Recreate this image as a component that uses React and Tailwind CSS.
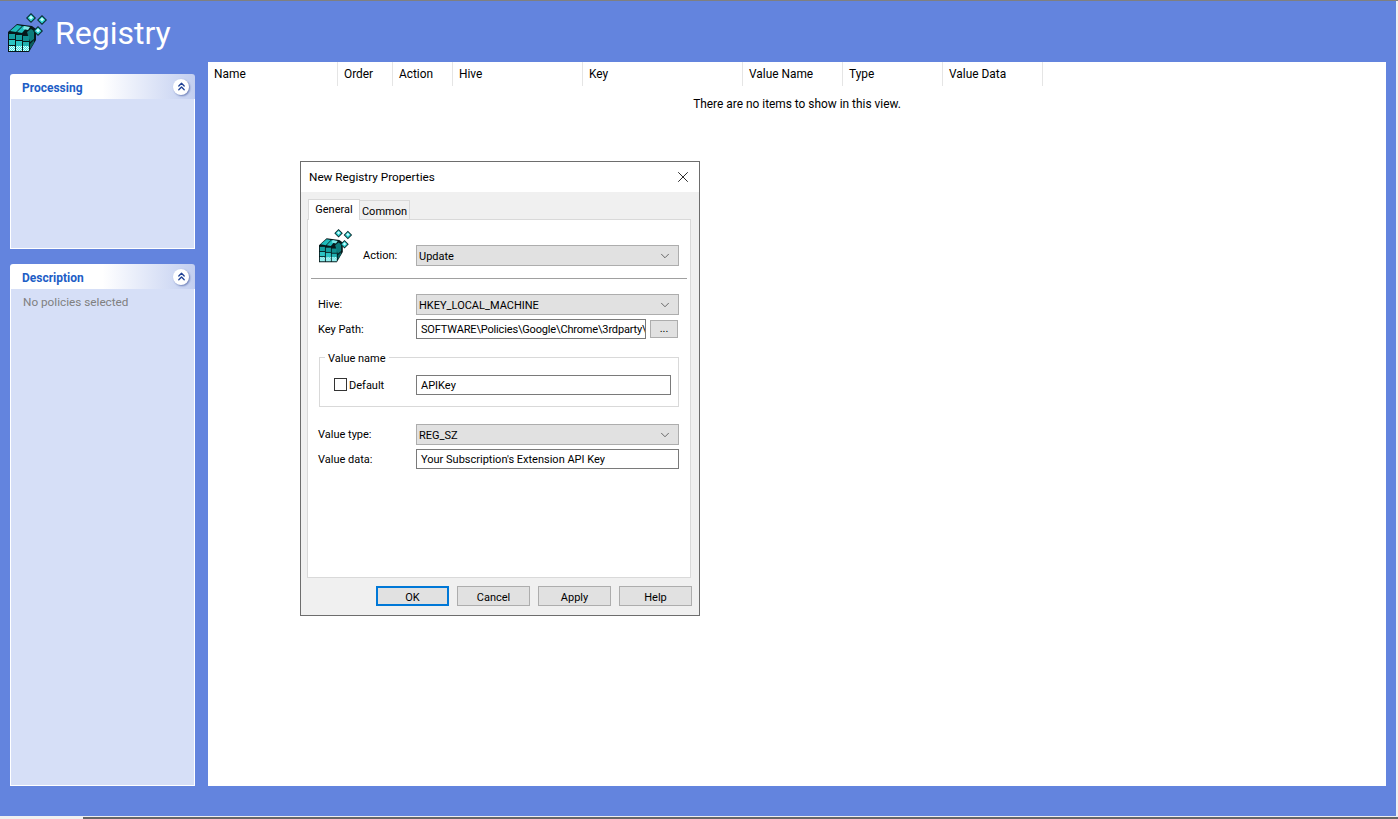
import { X, ChevronDown, ChevronsUp } from "lucide-react";

const font = "font-['Roboto','Noto_Sans',sans-serif]";

const columns = [
  { label: "Name", width: "w-[130px]" },
  { label: "Order", width: "w-[55px]" },
  { label: "Action", width: "w-[60px]" },
  { label: "Hive", width: "w-[130px]" },
  { label: "Key", width: "w-[160px]" },
  { label: "Value Name", width: "w-[100px]" },
  { label: "Type", width: "w-[100px]" },
  { label: "Value Data", width: "w-[100px]" },
];

const frontCells = [
  [1, 21, "#14a0a0"], [8, 22, "#14a0a0"], [15, 23, "#0f8f8f"],
  [1, 27, "#2cc4c4"], [8, 28, "#2cc4c4"], [15, 29, "#22b0b0"],
  [1, 33, "dither"], [8, 33, "dither"], [15, 33, "dither"],
];

const diamonds = [
  [23, 5],
  [34, 7],
  [30, 18],
];

// registry editor cube icon
function RegistryIcon({ size, id }) {
  return (
    <svg width={size} height={size} viewBox="0 0 40 40">
      <defs>
        <pattern id={id} width="2" height="2" patternUnits="userSpaceOnUse">
          <rect width="2" height="2" fill="#45dcdc" />
          <rect width="1" height="1" fill="#d8ffff" />
          <rect x="1" y="1" width="1" height="1" fill="#d8ffff" />
        </pattern>
      </defs>
      <path d="M0 19l9-8 15 2 4 3v11l-7 12H0z" fill="#06181a" />
      <path d="M2 18l7-6 5 1-6 6zM9 19l6-6 4 1-5 6z" fill="#1fbcbc" />
      <path d="M16 13l6 1-2 3-5-1z" fill="#7ee8e8" />
      <path d="M19 19l4-3 3 2v8l-4 3z" fill="#0d7c7c" />
      <path d="M22 31l4-4v3l-4 6z" fill="#0a5f5f" />
      {frontCells.map(([x, y, fill], i) => (
        <path key={i} d={`M${x} ${y}h6v5h-6z`} fill={fill === "dither" ? `url(#${id})` : fill} />
      ))}
      {diamonds.map(([x, y]) => (
        <g key={x}>
          <path d={`M${x} ${y - 5}l5 5-5 5-5-5z`} fill="#062a2c" />
          <path d={`M${x} ${y - 3.5}l3.5 3.5-3.5 3.5-3.5-3.5z`} fill="#2fd0d0" />
          <path d={`M${x} ${y - 2.5}l2 2-2 2-2-2z`} fill="#c8ffff" />
        </g>
      ))}
    </svg>
  );
}

function TaskPanel({ title, bodyHeight, children }) {
  return (
    <div className={"flex flex-col " + (bodyHeight ? "" : "flex-1")}>
      <div className="h-[25px] rounded-t-[3px] bg-gradient-to-r from-white from-50% to-[#c3cff0] flex items-center justify-between pl-3 pr-[6px]">
        <span className="pt-[2px] text-[12px] font-bold text-[#215dc6]">{title}</span>
        <span className="w-[16px] h-[16px] rounded-full bg-white shadow-[1px_1px_2px_#6f80b8] flex items-center justify-center">
          <ChevronsUp size={13} strokeWidth={2.4} className="text-[#1c3f94]" />
        </span>
      </div>
      <div
        className={
          "bg-[#d6dff7] border-x border-b border-white px-3 pt-[5px] text-[11.75px] text-[#808080] " +
          (bodyHeight ? bodyHeight : "flex-1")
        }
      >
        {children}
      </div>
    </div>
  );
}

function Combo({ value }) {
  return (
    <div className="h-[21px] w-[263px] bg-[#e1e1e1] border border-[#adadad] flex items-center justify-between pl-[2px] pr-[6px] text-[11px] text-black">
      <span className="pt-[4px]">{value}</span>
      <ChevronDown size={14} strokeWidth={1.2} className="text-[#333]" />
    </div>
  );
}

function Field({ value, width, tight }) {
  return (
    <div
      className={
        "h-[20px] bg-white border border-[#7a7a7a] flex items-center pl-[4px] pt-[3px] text-[11px] text-black overflow-hidden whitespace-nowrap " +
        (tight ? "tracking-[-0.16px] " : "") +
        width
      }
    >
      {value}
    </div>
  );
}

function Row({ label, children, className = "" }) {
  return (
    <div className={"flex items-center pl-[10px] " + className}>
      <span className="w-[98px] pt-[2px] text-[11px] text-black">{label}</span>
      {children}
    </div>
  );
}

function DialogButton({ label, focused }) {
  return (
    <div
      className={
        "w-[73px] h-[20px] bg-[#e1e1e1] flex items-center justify-center text-[11px] text-black " +
        (focused ? "border-2 border-[#0078d7]" : "border border-[#adadad]")
      }
    >
      <span className="pt-[4px]">{label}</span>
    </div>
  );
}

function RegistryDialog() {
  return (
    <div className="absolute left-[300px] top-[161px] w-[400px] h-[455px] bg-[#f0f0f0] border border-[#6d6d6d] flex flex-col">
      <div className="h-[30px] bg-white flex items-center justify-between pl-2 pr-[7px] shrink-0">
        <span className="pt-[2px] text-[11.75px] text-black">New Registry Properties</span>
        <X size={18} strokeWidth={1.1} className="text-black" />
      </div>

      <div className="flex items-end pl-[7px] h-[27px] shrink-0">
        <div className="w-[52px] h-[21px] bg-white border border-b-0 border-[#d9d9d9] flex items-center justify-center text-[11px] text-black -mb-px z-10">
          General
        </div>
        <div className="w-[50px] h-[19px] bg-[#f0f0f0] border border-b-0 border-l-0 border-[#d9d9d9] flex items-center justify-center text-[11px] text-black">
          <span className="pt-[5px]">Common</span>
        </div>
      </div>

      <div className="ml-[6px] w-[384px] h-[359px] bg-white border border-[#d9d9d9] shrink-0">
        <div className="flex h-[58px]">
          <div className="ml-[11px] mt-[9px] w-[34px]">
            <RegistryIcon size={34} id="dither-small" />
          </div>
          <div className="flex items-start mt-[25px] ml-[10px]">
            <span className="w-[53px] text-[11px] text-black mt-[3px]">Action:</span>
            <Combo value="Update" />
          </div>
        </div>
        <div className="mx-[3px] h-px bg-[#a0a0a0]" />

        <Row label="Hive:" className="mt-[15px]">
          <Combo value="HKEY_LOCAL_MACHINE" />
        </Row>
        <Row label="Key Path:" className="mt-[4px]">
          <Field value="SOFTWARE\Policies\Google\Chrome\3rdparty\" width="w-[230px]" tight />
          <div className="ml-[4px] w-[28px] h-[18px] bg-[#e1e1e1] border border-[#adadad] flex items-center justify-center text-[11px] text-black">
            ...
          </div>
        </Row>

        <div className="relative ml-[11px] mt-[18px] w-[360px] h-[50px] border border-[#d9d9d9] flex items-start pt-[17px]">
          <span className="absolute left-[5px] -top-[7px] bg-white px-[3px] text-[11px] leading-[16px] text-black">
            Value name
          </span>
          <div className="ml-[14px] mt-[3px] w-[13px] h-[13px] bg-white border border-[#333]" />
          <span className="ml-[2px] mt-[3px] w-[67px] text-[11px] text-black">Default</span>
          <Field value="APIKey" width="w-[255px]" />
        </div>

        <Row label="Value type:" className="mt-[17px]">
          <Combo value="REG_SZ" />
        </Row>
        <Row label="Value data:" className="mt-[4px]">
          <Field value="Your Subscription's Extension API Key" width="w-[263px]" />
        </Row>
      </div>

      <div className="flex justify-end gap-2 pr-[7px] mt-[8px]">
        <DialogButton label="OK" focused />
        <DialogButton label="Cancel" />
        <DialogButton label="Apply" />
        <DialogButton label="Help" />
      </div>
    </div>
  );
}

export default function App() {
  return (
    <div className={"relative w-[1398px] h-[819px] bg-[#f0f0f0] overflow-hidden " + font}>
      <div className="h-px bg-[#7f7f7f]" />
      <div className="w-[1396px] h-[815px] bg-[#6384de] flex flex-col">
        <div className="h-[61px] flex items-center pl-[8px] pt-[2px] shrink-0">
          <RegistryIcon size={40} id="dither-large" />
          <span className="ml-[7px] text-[32px] leading-none text-white">Registry</span>
        </div>

        <div className="flex h-[724px] shrink-0">
          <div className="w-[185px] ml-[10px] mt-[12px] flex flex-col gap-[15px]">
            <TaskPanel title="Processing" bodyHeight="h-[150px]" />
            <TaskPanel title="Description">No policies selected</TaskPanel>
          </div>

          <div className="ml-[13px] w-[1178px] bg-white">
            <div className="flex h-[24px]">
              {columns.map((col) => (
                <div
                  key={col.label}
                  className={"border-r border-[#e5e5e5] flex items-center pl-[6px] pt-[2px] text-[11.9px] text-black " + col.width}
                >
                  {col.label}
                </div>
              ))}
            </div>
            <div className="mt-[10px] text-center text-[11.9px] text-black">
              There are no items to show in this view.
            </div>
          </div>
        </div>
      </div>
      <div className="mt-[1px] ml-[83px] h-[2px] bg-[#666]" />

      <RegistryDialog />
    </div>
  );
}
